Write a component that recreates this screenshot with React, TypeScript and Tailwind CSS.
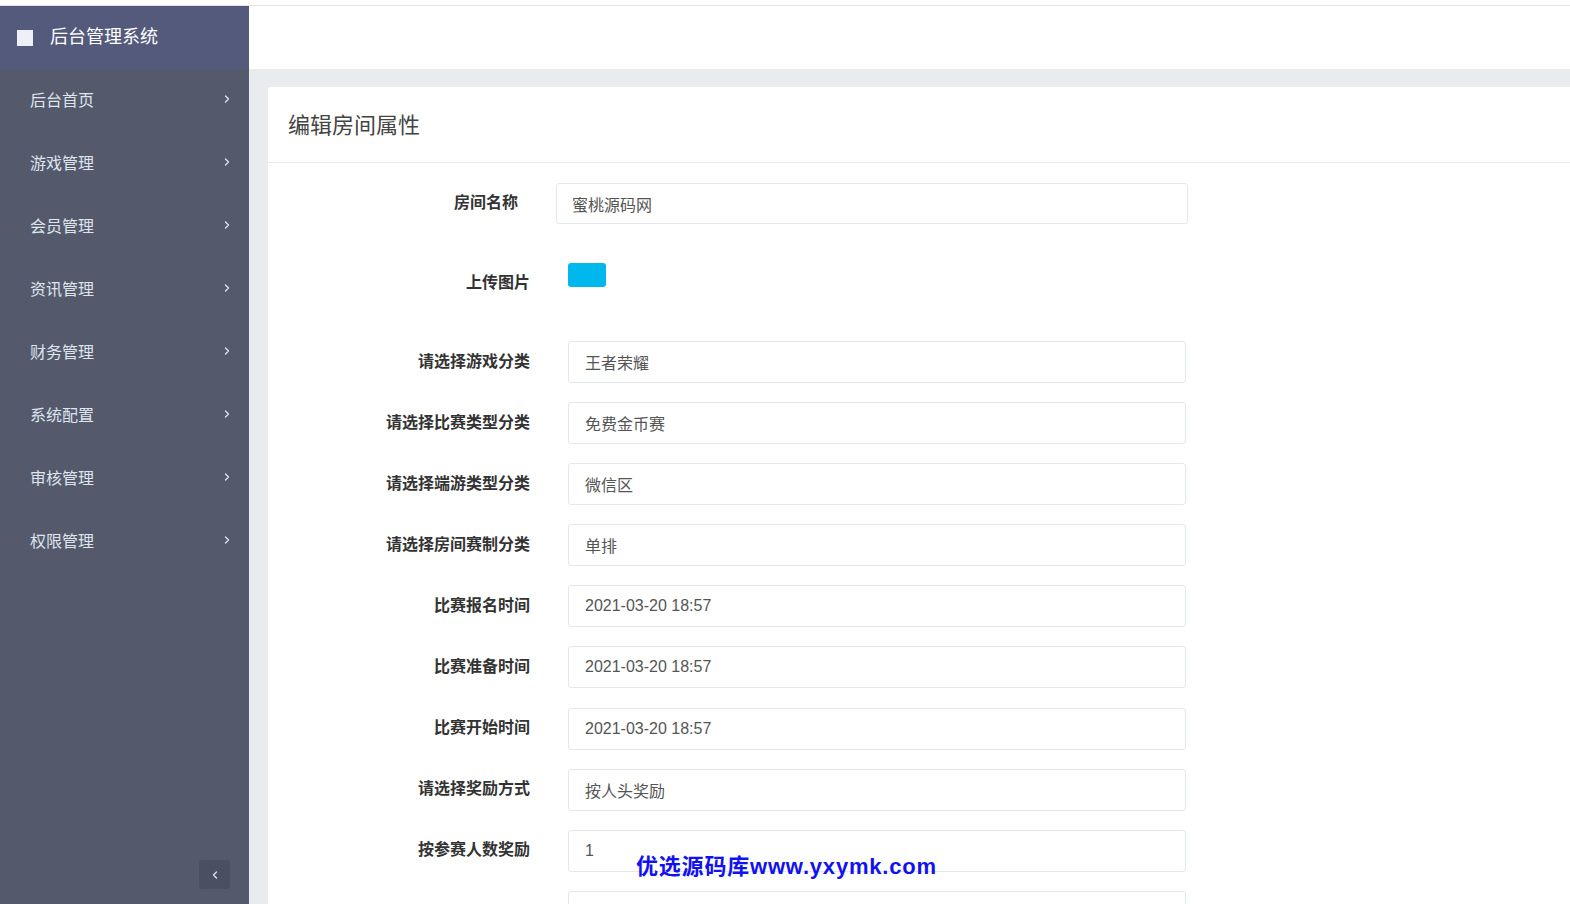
import { ChevronLeft, ChevronRight } from "lucide-react"

const menus = ["后台首页", "游戏管理", "会员管理", "资讯管理", "财务管理", "系统配置", "审核管理", "权限管理"]

const rows = [
  { label: "请选择游戏分类", value: "王者荣耀" },
  { label: "请选择比赛类型分类", value: "免费金币赛" },
  { label: "请选择端游类型分类", value: "微信区" },
  { label: "请选择房间赛制分类", value: "单排" },
  { label: "比赛报名时间", value: "2021-03-20 18:57" },
  { label: "比赛准备时间", value: "2021-03-20 18:57" },
  { label: "比赛开始时间", value: "2021-03-20 18:57" },
  { label: "请选择奖励方式", value: "按人头奖励" },
  { label: "按参赛人数奖励", value: "1" },
  { label: "", value: "" },
]

export default function App() {
  return (
    <div
      className="h-screen overflow-hidden bg-white pt-[5px] flex flex-col"
      style={{ fontFamily: '"Liberation Sans", "Noto Sans CJK SC", sans-serif' }}
    >
      <div className="flex flex-1 min-h-0 border-t border-[#e3e4e6]">
        {/* sidebar */}
        <aside className="w-[249px] shrink-0 flex flex-col bg-[#545a6b]">
          <div className="h-[63px] bg-[#545a7c] flex items-center pl-[17px]">
            <span className="w-4 h-4 bg-[#eef0f5]" />
            <span className="ml-[17px] text-[18px] text-white">后台管理系统</span>
          </div>
          <nav className="flex-1">
            {menus.map(m => (
              <div key={m} className="h-[63px] flex items-center justify-between pl-[30px] pr-[16px] text-[16px] text-[#dfe4ee]">
                <span>{m}</span>
                <ChevronRight className="w-[12px] h-[12px] -mt-[4px]" strokeWidth={2.75} />
              </div>
            ))}
          </nav>
          <div className="flex justify-end pr-[19px] pb-[15px]">
            <button className="w-[31px] h-[29px] rounded-[3px] bg-[#4a5061] flex items-center justify-center text-[#dfe4ee]">
              <ChevronLeft className="w-[12px] h-[12px]" strokeWidth={2.75} />
            </button>
          </div>
        </aside>

        {/* main */}
        <main className="flex-1 min-w-0 flex flex-col">
          <div className="h-[63px] bg-white shrink-0" />
          <div className="flex-1 bg-[#e9ecef] pt-[18px] pl-[19px] overflow-hidden">
            <div className="bg-white rounded-tl-[3px] h-full">
              <div className="h-[76px] flex items-center pl-[20px] border-b border-[#e8e9eb]">
                <h2 className="text-[22px] text-[#444] font-normal mt-[2px]">编辑房间属性</h2>
              </div>

              <div className="pt-[20px]">
                <div className="flex items-center">
                  <label className="w-[250px] text-right text-[16px] font-bold text-[#333] -mt-[1px]">房间名称</label>
                  <input
                    readOnly
                    value="蜜桃源码网"
                    className="ml-[38px] w-[632px] h-[41px] border border-[#e3e7ee] rounded-[3px] pl-[15px] text-[16px] text-[#555] outline-none"
                  />
                </div>

                <div className="flex items-start mt-[39px]">
                  <label className="w-[262px] text-right text-[16px] font-bold text-[#333] pt-[8px]">上传图片</label>
                  <button className="ml-[38px] w-[38px] h-[24px] rounded-[3px] bg-[#00b7ee]" />
                </div>

                <div className="mt-[46px] flex flex-col gap-[19.1px]">
                  {rows.map((r, i) => (
                    <div key={i} className="flex items-center">
                      <label className="w-[262px] text-right text-[16px] font-bold text-[#333] -mt-[1px]">{r.label}</label>
                      <input
                        readOnly
                        value={r.value}
                        className="ml-[38px] w-[618px] h-[42px] border border-[#e3e7ee] rounded-[3px] pl-[16px] text-[16px] text-[#555] outline-none"
                      />
                    </div>
                  ))}
                </div>
              </div>
            </div>
          </div>
        </main>
      </div>

      <div className="absolute left-[636px] top-[850px] text-[22px] font-bold text-[#1212f0] tracking-[0.8px] pointer-events-none">
        优选源码库www.yxymk.com
      </div>
    </div>
  )
}
